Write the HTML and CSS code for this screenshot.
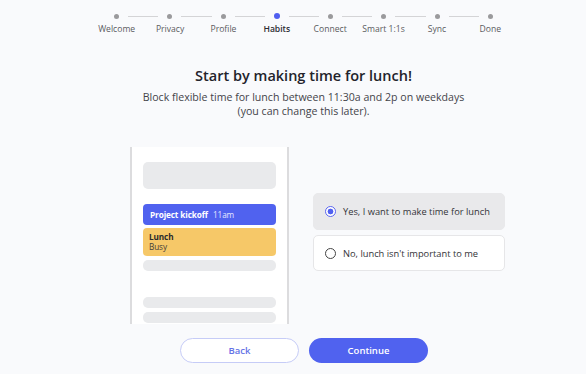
FILE: index.html
```html
<!DOCTYPE HTML>
<html>

<head>
  <title>Onboarding | Habits</title>
  <meta name="viewport" content="width=device-width, initial-scale=1">
  <link rel="stylesheet" href="styles.css">
</head>

<body>
  <nav class="steps">
    <div class="dots">
      <span class="dot"></span><span class="line"></span>
      <span class="dot"></span><span class="line"></span>
      <span class="dot"></span><span class="line"></span>
      <span class="dot active"></span><span class="line"></span>
      <span class="dot"></span><span class="line"></span>
      <span class="dot"></span><span class="line"></span>
      <span class="dot"></span><span class="line"></span>
      <span class="dot"></span>
    </div>
    <div class="labels">
      <span>Welcome</span>
      <span>Privacy</span>
      <span>Profile</span>
      <span class="current">Habits</span>
      <span>Connect</span>
      <span>Smart 1:1s</span>
      <span>Sync</span>
      <span>Done</span>
    </div>
  </nav>

  <header class="intro">
    <h1>Start by making time for lunch!</h1>
    <p>Block flexible time for lunch between 11:30a and 2p on weekdays<br>(you can change this later).</p>
  </header>

  <section class="choice">
    <div class="calendar">
      <div class="slot big"></div>
      <div class="event kickoff"><b>Project kickoff</b> 11am</div>
      <div class="event lunch"><b>Lunch</b><span>Busy</span></div>
      <div class="slot"></div>
      <div class="slot gap"></div>
      <div class="slot"></div>
    </div>

    <div class="options">
      <label class="option selected">
        <input type="radio" name="lunch" checked>
        <span class="radio"></span>
        Yes, I want to make time for lunch
      </label>
      <label class="option">
        <input type="radio" name="lunch">
        <span class="radio"></span>
        No, lunch isn't important to me
      </label>
    </div>
  </section>

  <footer class="actions">
    <button class="btn back">Back</button>
    <button class="btn continue">Continue</button>
  </footer>
</body>

</html>
```

FILE: styles.css
```css
body {
  margin: 0;
  padding-left: 21px;
  background-color: #f9fafc;
  font-family: "Open Sans", "DejaVu Sans", sans-serif;
  color: #222;
}

.steps {
  width: 427px;
  margin: 0 auto;
  padding-top: 13px;
}

.dots {
  display: flex;
  align-items: center;
  height: 6px;
  padding: 0 24px;
}

.dot {
  width: 5px;
  height: 5px;
  border-radius: 50%;
  background: #9a9a9c;
  flex: none;
}

.dot.active {
  width: 6px;
  height: 6px;
  background: #4f5ef0;
}

.line {
  flex: 1;
  height: 1px;
  background: #d4d4d6;
  margin: 0 9px;
}

.labels {
  display: grid;
  grid-template-columns: repeat(8, 1fr);
  margin-top: 4px;
  font-size: 8.6px;
  line-height: 12px;
  color: #5a5a5e;
  text-align: center;

  & .current {
    color: #2d2d33;
    font-weight: 600;
  }
}

.intro {
  text-align: center;
  margin-top: 31px;

  & h1 {
    font-size: 14.5px;
    font-weight: 600;
    margin: 0;
    line-height: 20px;
    color: #23232b;
  }

  & p {
    margin: 4px 0 0;
    font-size: 10.6px;
    line-height: 14px;
    color: #44444a;
  }
}

.choice {
  display: flex;
  align-items: center;
  gap: 24px;
  padding-left: 109px;
  margin-top: 29px;
}

.calendar {
  width: 133px;
  height: 162px;
  padding: 15px 11px 0;
  background: #fff;
  border-left: 2px solid #dcdcde;
  border-right: 2px solid #dcdcde;
  overflow: hidden;
  display: flex;
  flex-direction: column;
  gap: 4px;
}

.slot {
  height: 11px;
  border-radius: 5px;
  background: #e9eaec;
  flex: none;
}

.slot.big {
  height: 27px;
  margin-bottom: 11px;
}

.slot.gap {
  margin-top: 22px;
}

.event {
  border-radius: 4px;
  padding: 0 7px;
  font-size: 8.2px;
  letter-spacing: -0.1px;
  flex: none;
}

.kickoff {
  height: 21px;
  line-height: 21px;
  background: #5062ef;
  color: #e6e9ff;
  margin-bottom: -1px;

  & b {
    color: #fff;
    margin-right: 3px;
  }
}

.lunch {
  height: 28px;
  background: #f6c868;
  color: #45403a;
  display: flex;
  flex-direction: column;
  justify-content: center;
  line-height: 10px;
  padding: 0 6px;

  & b {
    color: #2a2a2a;
  }
}

.options {
  display: flex;
  flex-direction: column;
  gap: 5px;
  width: 192px;
  margin-bottom: 7px;
}

.option {
  display: flex;
  align-items: center;
  gap: 7px;
  height: 34px;
  padding: 0 11px;
  border: 1px solid #e6e6e8;
  border-radius: 5px;
  background: #fff;
  font-size: 9.3px;
  white-space: nowrap;
  color: #333338;
  cursor: pointer;

  & input {
    display: none;
  }
}

.option.selected {
  background: #e9e9eb;
  border-color: #e9e9eb;
  height: 35px;
}

.radio {
  width: 9px;
  height: 9px;
  border-radius: 50%;
  border: 1.5px solid #444;
  flex: none;
}

.selected .radio {
  border-color: #5b66f0;
  background: radial-gradient(circle, #5060ef 0 2.6px, #fff 3.2px);
}

.actions {
  display: flex;
  gap: 10px;
  padding-left: 159px;
  margin-top: 14px;
}

.btn {
  width: 119px;
  height: 25px;
  border-radius: 13px;
  font-family: inherit;
  font-size: 9.5px;
  font-weight: 600;
  cursor: pointer;
}

.back {
  background: #fff;
  border: 1px solid #c6ccf7;
  color: #6472e6;
}

.continue {
  background: #5062ef;
  border: none;
  color: #fff;
}
```
